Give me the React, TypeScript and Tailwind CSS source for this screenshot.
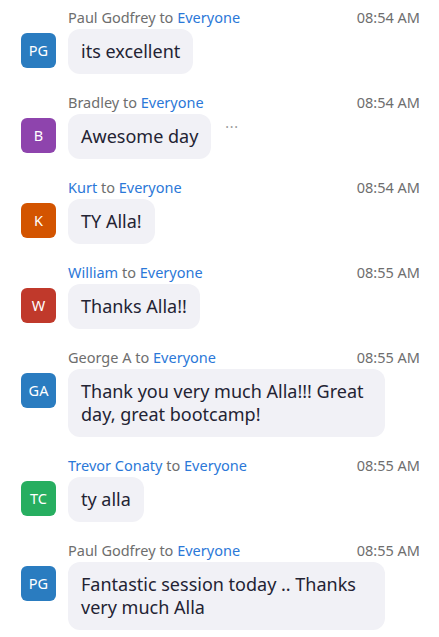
const messages = [
  { initials: 'PG', color: 'bg-[#2a7cc0]', name: 'Paul Godfrey', nameBlue: false, time: '08:54 AM', text: 'its excellent' },
  { initials: 'B', color: 'bg-[#8e44ad]', name: 'Bradley', nameBlue: false, time: '08:54 AM', text: 'Awesome day', more: true },
  { initials: 'K', color: 'bg-[#d35400]', name: 'Kurt', nameBlue: true, time: '08:54 AM', text: 'TY Alla!' },
  { initials: 'W', color: 'bg-[#c0392b]', name: 'William', nameBlue: true, time: '08:55 AM', text: 'Thanks Alla!!' },
  { initials: 'GA', color: 'bg-[#2a7cc0]', name: 'George A', nameBlue: false, time: '08:55 AM', text: 'Thank you very much Alla!!! Great day, great bootcamp!' },
  { initials: 'TC', color: 'bg-[#27ae60]', name: 'Trevor Conaty', nameBlue: true, time: '08:55 AM', text: 'ty alla' },
  { initials: 'PG', color: 'bg-[#2a7cc0]', name: 'Paul Godfrey', nameBlue: false, time: '08:55 AM', text: 'Fantastic session today .. Thanks very much Alla' },
];

export default function App() {
  return (
    <div className="w-[439px] h-[637px] bg-white overflow-hidden font-['Noto_Sans',sans-serif]">
      {messages.map((m, i) => (
        <div key={i} className="flex pt-2 pb-[11px] pl-[21px] pr-[19px]">
          <div className="w-[35px] shrink-0 mt-[25px]">
            <div className={`w-[35px] h-[35px] rounded-md ${m.color} text-white text-[14.5px] flex items-center justify-center`}>
              {m.initials}
            </div>
          </div>
          <div className="ml-3 flex-1 min-w-0">
            <div className="flex justify-between text-[14.5px] leading-[19px] text-[#6e6e6e]">
              <span>
                <span className={m.nameBlue ? 'text-[#2b78d8]' : ''}>{m.name}</span> to{' '}
                <span className="text-[#2b78d8]">Everyone</span>
              </span>
              <span>{m.time}</span>
            </div>
            <div className="mt-[2px] flex items-start">
              <div className="max-w-[317px] bg-[#f1f1f6] rounded-xl px-[13px] py-[11px] text-[18px] leading-[23px] text-[#232333]">
                {m.text}
              </div>
              {m.more && <span className="ml-[14px] mt-[2px] text-[#999] text-[14px] tracking-wider">···</span>}
            </div>
          </div>
        </div>
      ))}
    </div>
  );
}
